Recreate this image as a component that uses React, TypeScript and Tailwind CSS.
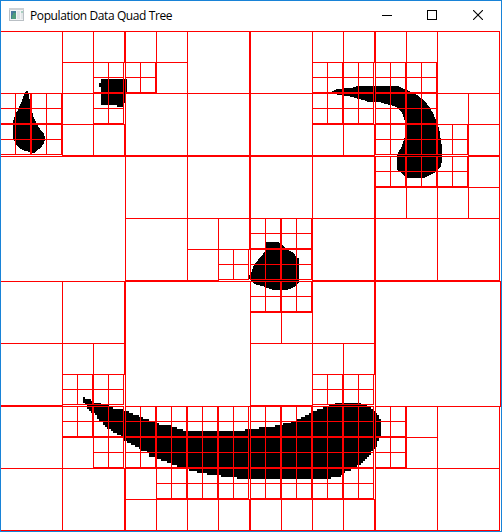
import React from "react";

type Point = [number, number];
interface Cell {
  x: number;
  y: number;
  size: number;
}

const CANVAS = 500;
const MIN_CELL = 15;

// Populated areas as [column, row] on a 16 x 16 grid laid over the canvas.
const populated: Point[] = [
  [3, 1], [4, 1], [10, 1], [11, 1], [12, 1], [13, 1],
  [0, 2], [1, 2], [3, 2], [10, 2], [11, 2], [12, 2], [13, 2],
  [0, 3], [1, 3], [12, 3], [13, 3], [14, 3],
  [12, 4], [13, 4], [14, 4],
  [8, 6], [9, 6],
  [7, 7], [8, 7], [9, 7],
  [8, 8], [9, 8],
  [2, 11], [3, 11], [10, 11], [11, 11],
  [2, 12], [3, 12], [4, 12], [5, 12], [6, 12], [7, 12], [8, 12], [9, 12], [10, 12], [11, 12], [12, 12],
  [3, 13], [4, 13], [5, 13], [6, 13], [7, 13], [8, 13], [9, 13], [10, 13], [11, 13], [12, 13],
  [5, 14], [6, 14], [7, 14], [8, 14], [9, 14], [10, 14], [11, 14],
];

const samples: Point[] = populated.map(([c, r]) => [(c + 0.5) * 31.25, (r + 0.5) * 31.25]);

function leaves(x: number, y: number, size: number): Cell[] {
  const occupied = samples.some(([px, py]) => px >= x && px < x + size && py >= y && py < y + size);
  // The smallest cells are always leaves.
  if (size <= MIN_CELL || !occupied) return [{ x, y, size }];
  const half = Math.floor(size / 2);
  if (half === MIN_CELL) {
    return [0, half].flatMap((dy) => [0, half].map((dx) => ({ x: x + dx, y: y + dy, size: half })));
  }
  return [0, half].flatMap((dy) => [0, half].flatMap((dx) => leaves(x + dx, y + dy, half)));
}

const cells = leaves(0, 0, CANVAS);

const blobs: string[] = [
  // teardrop
  "26,91 28,91 29,96 30,101 30,106 32,111 33,115 34,118 36,122 38,126 40,129 41,131 44,134 45,137 45,140 44,143 42,146 39,149 36,151 34,153 32,153 30,152 25,151 21,149 18,147 16,144 14,140 13,139 13,122 14,118 16,113 18,110 20,105 22,101 24,95",
  // square
  "101,79 127,79 127,92 125,93 125,103 124,103 124,107 117,107 117,105 101,105 101,87 99,87 99,83 101,83",
  // hook
  "331,92 337,89 351,88 358,86 398,86 402,88 407,90 411,92 417,95 422,99 427,104 430,108 433,113 435,118 437,123 439,128 440,134 441,141 442,147 442,161 441,166 438,169 434,173 430,175 424,178 406,178 404,175 400,172 397,170 397,156 399,151 401,148 403,143 405,137 405,132 405,121 404,118 402,113 400,110 396,107 390,105 385,104 380,102 368,102 364,100 358,99 353,97 347,96 338,95 335,94",
  // centre
  "266,242 278,242 281,244 284,247 288,250 292,252 295,255 297,258 299,258 299,282 297,284 294,287 290,289 286,290 273,290 267,288 263,286 257,285 253,283 249,279 249,275 251,274 252,270 254,265 258,260 263,254 266,250",
];

// The long curve is built from steps: run to x, then move to y.
const curveTop: Point[] = [
  [85, 399], [91, 401], [93, 403], [101, 405], [109, 407], [113, 409], [123, 411], [129, 413], [133, 415],
  [139, 417], [143, 419], [149, 421], [157, 423], [159, 425], [171, 427], [177, 429], [183, 431], [245, 429],
  [259, 427], [275, 425], [283, 423], [291, 421], [297, 419], [301, 417], [305, 415], [309, 413], [313, 411],
  [317, 409], [323, 407], [329, 405], [335, 403], [361, 405], [367, 407], [371, 409], [373, 411], [375, 413],
  [377, 415], [379, 419], [381, 437],
];
const curveBottom: Point[] = [
  [379, 441], [377, 447], [375, 449], [373, 451], [371, 455], [369, 457], [367, 459], [365, 461], [363, 463],
  [361, 465], [357, 469], [351, 471], [345, 473], [343, 475], [341, 477], [331, 479], [237, 477], [221, 475],
  [207, 473], [197, 471], [189, 469], [183, 467], [177, 465], [171, 463], [167, 461], [161, 459], [157, 457],
  [149, 453], [147, 451], [141, 449], [139, 447], [135, 445], [131, 443], [127, 441], [123, 437], [121, 435],
  [117, 433], [113, 431], [111, 429], [107, 427], [105, 425], [103, 421], [99, 419], [97, 415], [95, 413],
  [91, 411], [89, 409], [87, 405], [85, 403], [83, 397],
];
const curvePath = "M83 397" + [...curveTop, ...curveBottom].map(([x, y]) => `H${x}V${y}`).join("") + "Z";

function AppIcon() {
  return (
    <svg width="16" height="16" viewBox="0 0 16 16" shapeRendering="crispEdges">
      <rect x="1.5" y="0.5" width="14" height="12" fill="#f2f4f5" stroke="#b9bfc4" />
      <rect x="1" y="0" width="15" height="2" fill="#cdd2d6" />
      <rect x="3" y="3" width="5" height="8" fill="#3f7f91" />
      <rect x="4" y="5" width="4" height="6" fill="#4f9c7c" />
      <rect x="3" y="3" width="2" height="4" fill="#4b78a0" />
      <rect x="9" y="3" width="3" height="8" fill="#dfe3e6" />
      <rect x="13" y="3" width="2" height="8" fill="#e2e6e8" />
      <rect x="13" y="3" width="2" height="2" fill="#a9cfc0" />
    </svg>
  );
}

function TitleBar() {
  return (
    <header className="flex h-[30px] items-center bg-white pl-[7px]">
      <AppIcon />
      <h1 className="ml-[6px] grow whitespace-nowrap font-['Open_Sans','Noto_Sans',sans-serif] text-[12px] leading-[30px] tracking-[-0.4px] text-black">
        Population Data Quad Tree
      </h1>
      <div className="flex self-start">
        <button aria-label="Minimize" className="flex h-[28px] w-[44px] items-center justify-center">
          <svg width="10" height="10" shapeRendering="crispEdges">
            <rect y="5" width="10" height="1" />
          </svg>
        </button>
        <button aria-label="Maximize" className="flex h-[28px] w-[46px] items-center justify-center">
          <svg width="10" height="10" shapeRendering="crispEdges">
            <rect x="0.5" y="0.5" width="9" height="9" fill="none" stroke="black" />
          </svg>
        </button>
        <button aria-label="Close" className="flex h-[28px] w-[46px] items-center justify-center">
          <svg width="10" height="10">
            <path d="M0 0L10 10M10 0L0 10" stroke="black" strokeWidth="1.1" />
          </svg>
        </button>
      </div>
    </header>
  );
}

export default function App() {
  return (
    <main className="h-[532px] w-[502px] overflow-hidden border border-[#1883d7] bg-white">
      <TitleBar />
      <svg className="block" width="500" height="500" viewBox="1 31 500 500" shapeRendering="crispEdges">
        {blobs.map((points) => (
          <polygon key={points} points={points} />
        ))}
        <path d={curvePath} />
        <g transform="translate(0.5 31.5)" fill="none" stroke="#ff0000">
          {cells.map(({ x, y, size }) => (
            <rect key={`${x}-${y}`} x={x} y={y} width={size} height={size} />
          ))}
        </g>
      </svg>
    </main>
  );
}
